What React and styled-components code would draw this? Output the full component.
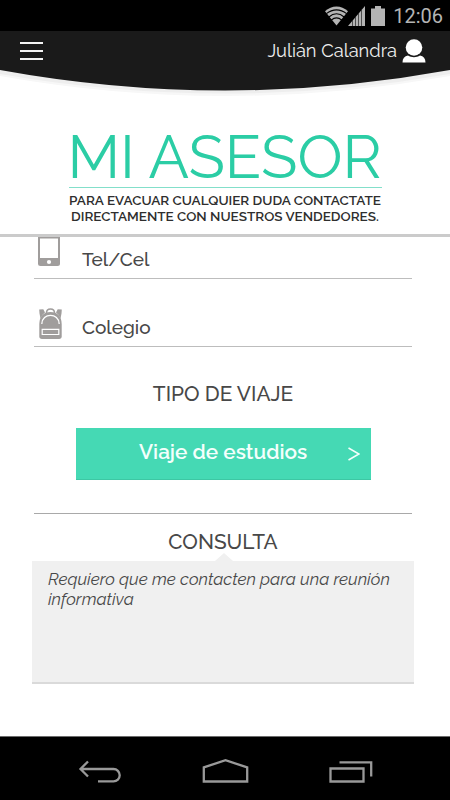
import React from 'react';
import styled, { createGlobalStyle } from 'styled-components';

const GlobalStyle = createGlobalStyle`
  * { box-sizing: border-box; }
  body { margin: 0; background: #fff; }
`;

const Screen = styled.div`
  display: flex;
  flex-direction: column;
  width: 450px;
  height: 800px;
  overflow: hidden;
  background: #fff;
  color: #484848;
  font-family: Raleway, Lato, sans-serif;
`;

const StatusBar = styled.div`
  display: flex;
  flex: none;
  justify-content: flex-end;
  align-items: center;
  height: 31px;
  padding-right: 7px;
  background: #000;
`;

const StatusIcons = styled.div`
  display: flex;
  align-items: center;

  svg:last-child { margin-left: 6px; }
`;

const Clock = styled.span`
  margin-left: 8px;
  color: #b4b4b4;
  font: 400 20px/30px Roboto, sans-serif;
`;

const Header = styled.header`
  position: relative;
  display: flex;
  flex: none;
  justify-content: space-between;
  align-items: center;
  height: 40px;
  padding: 0 24px 0 20px;
`;

const HeaderCurve = styled.svg`
  position: absolute;
  left: 0;
  top: 0;
`;

const MenuButton = styled.button`
  position: relative;
  display: flex;
  flex-direction: column;
  justify-content: space-between;
  width: 23px;
  height: 18px;
  padding: 0;
  border: 0;
  background: none;
`;

const MenuLine = styled.span`
  height: 2px;
  background: #f4f4f4;
`;

const User = styled.div`
  position: relative;
  display: flex;
  align-items: center;
  gap: 5px;
`;

const UserName = styled.span`
  color: #f0f0f0;
  font-weight: 400;
  font-size: 18.3px;
  line-height: 24px;
  white-space: nowrap;
`;

const Hero = styled.section`
  display: flex;
  flex: none;
  flex-direction: column;
  align-items: center;
  height: 166px;
  padding-top: 51px;
  border-bottom: 3px solid #cbcbcb;
`;

const Title = styled.h1`
  width: 313px;
  height: 66px;
  margin: 0;
  border-bottom: 1px solid #83dfca;
  color: #2bcda5;
  font-weight: 400;
  font-size: 60px;
  line-height: 71px;
  text-indent: -1px;
  white-space: nowrap;
`;

const Subtitle = styled.p`
  margin: 0;
  padding-top: 4px;
  color: #2e2e2e;
  font-weight: 600;
  font-size: 13.5px;
  line-height: 16px;
  text-align: center;
  white-space: nowrap;
`;

const Form = styled.main`
  display: flex;
  flex: 1;
  flex-direction: column;
  padding: 0 38px 0 34px;
`;

const Field = styled.label`
  display: flex;
  flex: none;
  align-items: flex-end;
  height: ${(p) => p.$height}px;
  padding: 0 0 ${(p) => p.$gap}px 4px;
  border-bottom: 1px solid #bdbdbd;
`;

const FieldText = styled.span`
  margin: 0 0 ${(p) => p.$lift}px ${(p) => p.$offset}px;
  font-weight: 500;
  font-size: 19px;
  line-height: 22px;
`;

const SectionTitle = styled.h2`
  margin: ${(p) => p.$top}px 0 0;
  font-weight: 500;
  font-size: 20.8px;
  line-height: 24px;
  text-align: center;
`;

const TripButton = styled.button`
  display: flex;
  flex: none;
  align-items: center;
  justify-content: space-between;
  width: 295px;
  height: 52px;
  margin: 22px 0 0 42px;
  padding: 0 11px 4px 63px;
  border: 0;
  border-bottom: 1px solid #3dc7a4;
  background: #45d9b4;
  color: #f4fffc;
  font: 600 20.8px/24px Raleway, Lato, sans-serif;
`;

const Chevron = styled.svg`
  margin-top: 4px;
  fill: none;
  stroke: #f4fffc;
  stroke-width: 1.6px;
`;

const Rule = styled.hr`
  flex: none;
  width: 100%;
  height: 1px;
  margin: 33px 0 0;
  border: 0;
  background: #a9a9a9;
`;

const Message = styled.div`
  position: relative;
  width: 382px;
  height: 123px;
  margin: 7px 0 0 -2px;
  padding: 8px 10px 0 16px;
  border-bottom: 2px solid #dadada;
  background: #f0f0f0;
  font-style: italic;
  font-size: 16.9px;
  line-height: 20px;

  &::before {
    content: '';
    position: absolute;
    left: 183px;
    top: -8px;
    border: solid transparent;
    border-width: 0 9px 8px;
    border-bottom-color: #f0f0f0;
  }
`;

const NavBar = styled.nav`
  display: flex;
  flex: none;
  justify-content: space-between;
  align-items: center;
  height: 64px;
  padding: 5px 77px 0 78px;
  border-top: 1px solid #6c6c6c;
  background: #000;
`;

const NavIcon = styled.svg`
  fill: none;
  stroke: #999;
  stroke-width: 2.3px;
`;

const WifiIcon = () => (
  <svg width="23" height="20" viewBox="0 0 24 20">
    <path d="M0 5 C7 -1.5 17 -1.5 24 5 L12 20 Z" fill="#b4b4b4" />
    <g fill="none" stroke="#000" strokeWidth="1.2">
      <path d="M1.500 7.500 C8 2.300 16 2.300 22.500 7.500" />
      <path d="M4 11 C9 6.800 15 6.800 20 11" />
      <path d="M6.500 14.300 C10 11.300 14 11.300 17.500 14.300" />
    </g>
  </svg>
);

const SignalIcon = () => (
  <svg width="17" height="20" viewBox="0 0 17 20">
    <path d="M17 0 V20 H0 Z" fill="#b4b4b4" />
    <path d="M4.500 14V20M7.500 11V20M10.500 7V20M13.500 3V20" stroke="#222" strokeWidth=".7" />
  </svg>
);

const BatteryIcon = () => (
  <svg width="14" height="20" viewBox="0 0 14 20">
    <path d="M4 0h6v2.500h4V20H0V2.500h4z" fill="#b4b4b4" />
  </svg>
);

const PersonIcon = () => (
  <svg width="24" height="24" viewBox="0 0 24 24" fill="#fff">
    <circle cx="12" cy="8.500" r="8.300" />
    <path d="M0.500 23.500 C0.500 19.500 2.500 17.200 6 16.500 C9.500 18.800 14.500 18.800 18 16.500 C21.500 17.200 23.500 19.500 23.500 23.500 Z" />
  </svg>
);

const PhoneIcon = () => (
  <svg width="22" height="29" viewBox="0 0 22 29">
    <path d="M0 0H22V26.500Q22 29 19.500 29H2.500Q0 29 0 26.500Z" fill="#a09d9c" />
    <path d="M2 1.500H20V21H2Z" fill="#fff" />
    <circle cx="11" cy="25" r="2.100" fill="#fff" />
  </svg>
);

const BackpackIcon = () => (
  <svg width="25" height="31" viewBox="0 0 25 31" fill="#a09d9c">
    <path d="M8.500 5C8.500 -.300 16.500 -.300 16.500 5" fill="none" stroke="#a09d9c" strokeWidth="1.600" />
    <path d="M1.200 1.500L5.300 1.200L7 4.500Q3.500 7 2.500 10.500L1.500 5.500ZM23.800 1.500L19.700 1.200L18 4.500Q21.500 7 22.500 10.500L23.500 5.500Z" />
    <path d="M1.300 16Q1.800 4 12.500 4T23.700 16V28.300Q23.700 31 21 31H4Q1.300 31 1.300 28.300Z" />
    <path d="M3.800 16C4 4.500 21 4.500 21.200 16" fill="none" stroke="#fff" strokeWidth="1.300" />
    <path d="M4.200 21.300H20.800V26.500H4.200Z" fill="none" stroke="#fff" strokeWidth="1.200" />
  </svg>
);

export default function App() {
  return (
    <>
      <GlobalStyle />
      <Screen>
        <StatusBar>
          <StatusIcons>
            <WifiIcon />
            <SignalIcon />
            <BatteryIcon />
          </StatusIcons>
          <Clock>12:06</Clock>
        </StatusBar>
        <Header>
          <HeaderCurve width="450" height="70" viewBox="0 0 450 70">
            <path d="M0 0H450V45Q225 85 0 45Z" fill="#f7f7f7" />
            <path d="M0 0H450V43Q225 82 0 43Z" fill="#eee" />
            <path d="M0 0H450V39Q225 80 0 39Z" fill="#1a1a1a" />
          </HeaderCurve>
          <MenuButton aria-label="Menú">
            <MenuLine />
            <MenuLine />
            <MenuLine />
          </MenuButton>
          <User>
            <UserName>Julián Calandra</UserName>
            <PersonIcon />
          </User>
        </Header>
        <Hero>
          <Title>MI ASESOR</Title>
          <Subtitle>
            PARA EVACUAR CUALQUIER DUDA CONTACTATE
            <br />
            DIRECTAMENTE CON NUESTROS VENDEDORES.
          </Subtitle>
        </Hero>
        <Form>
          <Field $height={42} $gap={12}>
            <PhoneIcon />
            <FieldText $offset={22} $lift={-4}>Tel/Cel</FieldText>
          </Field>
          <Field $height={68} $gap={7}>
            <BackpackIcon />
            <FieldText $offset={19} $lift={1}>Colegio</FieldText>
          </Field>
          <SectionTitle $top={35}>TIPO DE VIAJE</SectionTitle>
          <TripButton>
            Viaje de estudios
            <Chevron width="12" height="14" viewBox="0 0 12 14">
              <path d="M.5 1L11 7L.5 13" />
            </Chevron>
          </TripButton>
          <Rule />
          <SectionTitle $top={16}>CONSULTA</SectionTitle>
          <Message>Requiero que me contacten para una reunión informativa</Message>
        </Form>
        <NavBar>
          <NavIcon width="43" height="26" viewBox="78 758 43 26">
            <path d="M88 761.500L80.500 769L88 776.500M80.500 769H113.500A6.200 6.200 0 0 1 113.500 781.400H98" />
          </NavIcon>
          <NavIcon width="47" height="26" viewBox="201.500 758 47 26">
            <path d="M203.300 781.500V767.400L225 760.200L246.700 767.400V781.500Z" />
          </NavIcon>
          <NavIcon width="44" height="26" viewBox="329.500 758 44 26">
            <path d="M331 768.500H364V781.500H331ZM340 762.400H371.700V776.500" />
          </NavIcon>
        </NavBar>
      </Screen>
    </>
  );
}
